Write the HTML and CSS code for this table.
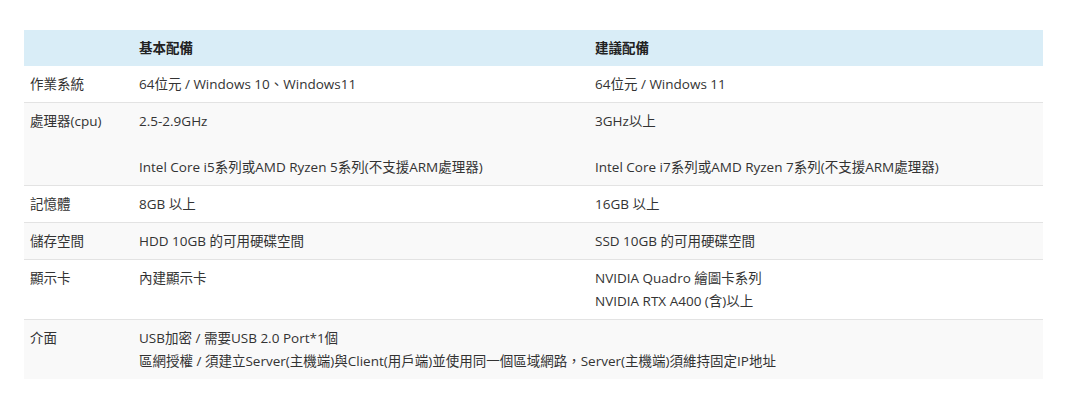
FILE: index.html
```html
<!DOCTYPE html>
<html lang="zh-Hant">
<head>
<meta charset="utf-8">
<title>系統需求</title>
<link rel="stylesheet" href="styles.css">
</head>
<body>
<div class="wrap">
<table class="spec">
  <colgroup>
    <col class="c1"><col class="c2"><col class="c3">
  </colgroup>
  <thead>
    <tr><th></th><th>基本配備</th><th>建議配備</th></tr>
  </thead>
  <tbody>
    <tr><td>作業系統</td><td>64位元 / Windows 10、Windows11</td><td>64位元 / Windows 11</td></tr>
    <tr class="alt"><td>處理器(cpu)</td><td>2.5-2.9GHz<br><br>Intel Core i5系列或AMD Ryzen 5系列(不支援ARM處理器)</td><td>3GHz以上<br><br>Intel Core i7系列或AMD Ryzen 7系列(不支援ARM處理器)</td></tr>
    <tr><td>記憶體</td><td>8GB 以上</td><td>16GB 以上</td></tr>
    <tr class="alt"><td>儲存空間</td><td>HDD 10GB 的可用硬碟空間</td><td>SSD 10GB 的可用硬碟空間</td></tr>
    <tr><td>顯示卡</td><td>內建顯示卡</td><td>NVIDIA Quadro 繪圖卡系列<br>NVIDIA RTX A400 (含)以上</td></tr>
    <tr class="alt"><td>介面</td><td colspan="2">USB加密 / 需要USB 2.0 Port*1個<br>區網授權 / 須建立Server(主機端)與Client(用戶端)並使用同一個區域網路，Server(主機端)須維持固定IP地址</td></tr>
  </tbody>
</table>
</div>
</body>
</html>
```

FILE: styles.css
```css
html, body {
  margin: 0;
  padding: 0;
  background: #fff;
}
body {
  font-family: "Open Sans", "Noto Sans CJK TC", sans-serif;
  font-size: 13.5px;
  color: #333;
}
.wrap {
  padding: 30px 26px 0 24px;
}
.spec {
  width: 1019px;
  border-collapse: collapse;
  table-layout: fixed;
}
.c1 { width: 109px; }
.c2 { width: 456px; }
.c3 { width: 454px; }
.spec th, .spec td {
  text-align: left;
  vertical-align: top;
  padding: 7px 6px 6px 6px;
  line-height: 23px;
  border-top: 1px solid #e3e3e3;
}
.spec th {
  background: #d9edf7;
  font-weight: bold;
  border-top: none;
  color: #222;
}
.spec tbody tr:first-child td {
  border-top: none;
}
.spec tr.alt td {
  background: #f9f9f9;
}
```
